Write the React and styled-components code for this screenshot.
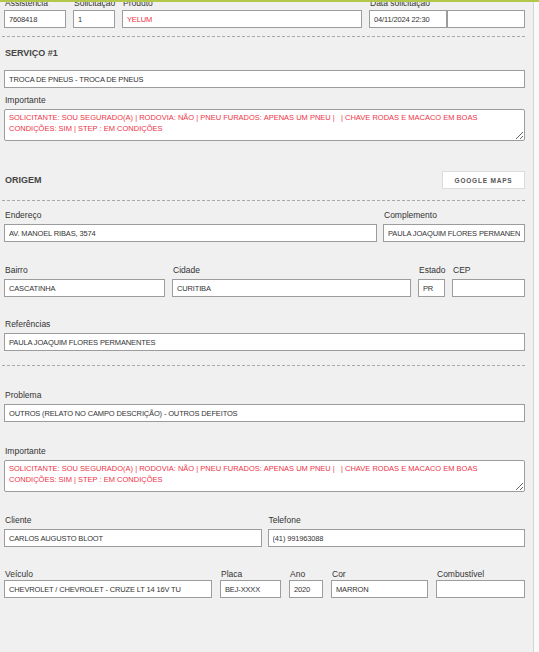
import React from 'react';
import styled, { createGlobalStyle } from 'styled-components';

const GlobalStyle = createGlobalStyle`
  html, body {
    margin: 0;
    padding: 0;
    background: #fafafa;
    font-family: "Liberation Sans", Arial, sans-serif;
  }
`;

const importante =
  'SOLICITANTE: SOU SEGURADO(A) | RODOVIA: NÃO | PNEU FURADOS: APENAS UM PNEU |   | CHAVE RODAS E MACACO EM BOAS CONDIÇÕES: SIM | STEP : EM CONDIÇÕES';

const Field = ({ label, value, red, $labelGap }) => (
  <FieldBox>
    <Label $gap={$labelGap}>{label}</Label>
    <Input readOnly value={value} $red={red} />
  </FieldBox>
);

const App = () => {
  return (
    <Page>
      <GlobalStyle />
      <TopBar />
      <Panel>
        <Form>
          <Row $cols="62px 42px 1fr 156px" $gap={7}>
            <Field label="Assistência" value="7608418" $labelGap={1} />
            <Field label="Solicitação" value="1" $labelGap={1} />
            <Field label="Produto" value="YELUM" red $labelGap={1} />
            <FieldBox>
              <Label $gap={1}>Data solicitação</Label>
              <Pair>
                <Input readOnly value="04/11/2024 22:30" />
                <Input readOnly value="" />
              </Pair>
            </FieldBox>
          </Row>

          <Divider $mt={8} />
          <SectionTitle $mt={10}>SERVIÇO #1</SectionTitle>

          <Row $mt={11}>
            <Input readOnly value="TROCA DE PNEUS - TROCA DE PNEUS" />
          </Row>
          <Row $mt={6}>
            <FieldBox>
              <Label>Importante</Label>
              <Notes readOnly value={importante} />
            </FieldBox>
          </Row>

          <SectionHeader $mt={30}>
            <SectionTitle>ORIGEM</SectionTitle>
            <MapsButton type="button">GOOGLE MAPS</MapsButton>
          </SectionHeader>

          <Divider $mt={11} />

          <Row $mt={8} $cols="1fr 142px" $gap={6}>
            <Field label="Endereço" value="AV. MANOEL RIBAS, 3574" />
            <Field label="Complemento" value="PAULA JOAQUIM FLORES PERMANENTES" />
          </Row>

          <Row $mt={22} $cols="161px 1fr 27px 73px" $gap={7}>
            <Field label="Bairro" value="CASCATINHA" />
            <Field label="Cidade" value="CURITIBA" />
            <Field label="Estado" value="PR" />
            <Field label="CEP" value="" />
          </Row>

          <Row $mt={21}>
            <Field label="Referências" value="PAULA JOAQUIM FLORES PERMANENTES" />
          </Row>

          <Divider $mt={14} />

          <Row $mt={23}>
            <Field label="Problema" value="OUTROS (RELATO NO CAMPO DESCRIÇÃO) - OUTROS DEFEITOS" />
          </Row>

          <Row $mt={23}>
            <FieldBox>
              <Label>Importante</Label>
              <Notes readOnly value={importante} />
            </FieldBox>
          </Row>

          <Row $mt={22} $cols="1fr 1fr" $gap={6}>
            <Field label="Cliente" value="CARLOS AUGUSTO BLOOT" />
            <Field label="Telefone" value="(41) 991963088" />
          </Row>

          <Row $mt={21} $cols="208px 61px 34px 97px 1fr" $gap={8}>
            <Field label="Veículo" value="CHEVROLET / CHEVROLET - CRUZE LT 14 16V TU" $labelGap={0} />
            <Field label="Placa" value="BEJ-XXXX" $labelGap={0} />
            <Field label="Ano" value="2020" $labelGap={0} />
            <Field label="Cor" value="MARRON" $labelGap={0} />
            <Field label="Combustível" value="" $labelGap={0} />
          </Row>
        </Form>
      </Panel>
    </Page>
  );
};

const Page = styled.div`
  min-height: 100vh;
  display: flex;
  flex-direction: column;
`;

const TopBar = styled.div`
  height: 2px;
  background: #b3c84b;
  flex-shrink: 0;
`;

const Panel = styled.div`
  width: 534px;
  box-sizing: border-box;
  flex: 1;
  background: #f0f0f0;
  border-right: 1px solid #d6d6d6;
  padding: 0 8px 0 4px;
  overflow: hidden;
`;

const Form = styled.div`
  margin-top: -5px;
  display: flex;
  flex-direction: column;
`;

const Row = styled.div`
  display: grid;
  grid-template-columns: ${({ $cols }) => $cols || '1fr'};
  column-gap: ${({ $gap }) => $gap || 0}px;
  margin-top: ${({ $mt }) => $mt || 0}px;
`;

const FieldBox = styled.div`
  display: flex;
  flex-direction: column;
  min-width: 0;
`;

const Pair = styled.div`
  display: grid;
  grid-template-columns: 1fr 1fr;
`;

const Label = styled.label`
  font-size: 8.5px;
  line-height: 12px;
  color: #333;
  padding-left: 1px;
  margin-bottom: ${({ $gap }) => ($gap === undefined ? 3 : $gap)}px;
  white-space: nowrap;
`;

const Input = styled.input`
  box-sizing: border-box;
  width: 100%;
  min-width: 0;
  height: 18px;
  margin: 0;
  padding: 0 4px;
  border: 1px solid #9c9c9c;
  border-radius: 0;
  background: #fff;
  font-family: "Liberation Sans", Arial, sans-serif;
  font-size: 7.5px;
  letter-spacing: -0.15px;
  color: ${({ $red }) => ($red ? '#ee3346' : '#333')};
  outline: none;
`;

const Notes = styled.textarea`
  box-sizing: border-box;
  width: 100%;
  height: 32px;
  margin: 0;
  padding: 2px 14px 2px 4px;
  border: 1px solid #9c9c9c;
  border-radius: 2px;
  background: #fff;
  font-family: "Liberation Sans", Arial, sans-serif;
  font-size: 7.5px;
  letter-spacing: 0;
  line-height: 11px;
  color: #ee3346;
  resize: both;
  overflow: hidden;
  outline: none;
`;

const Divider = styled.div`
  margin: ${({ $mt }) => $mt || 0}px 0 0 -2px;
  border-top: 1px dashed #a8a8a8;
`;

const SectionTitle = styled.h3`
  margin: ${({ $mt }) => $mt || 0}px 0 0 1px;
  font-size: 9px;
  line-height: 12px;
  font-weight: 700;
  color: #454545;
`;

const SectionHeader = styled.div`
  display: flex;
  justify-content: space-between;
  align-items: center;
  margin-top: ${({ $mt }) => $mt || 0}px;
`;

const MapsButton = styled.button`
  box-sizing: border-box;
  width: 83px;
  height: 18px;
  padding: 0;
  background: #fff;
  border: 1px solid #dcdcdc;
  border-radius: 0;
  font-family: "Liberation Sans", Arial, sans-serif;
  font-size: 6.5px;
  font-weight: 700;
  letter-spacing: 0.8px;
  color: #555;
  cursor: pointer;
`;

export default App;
